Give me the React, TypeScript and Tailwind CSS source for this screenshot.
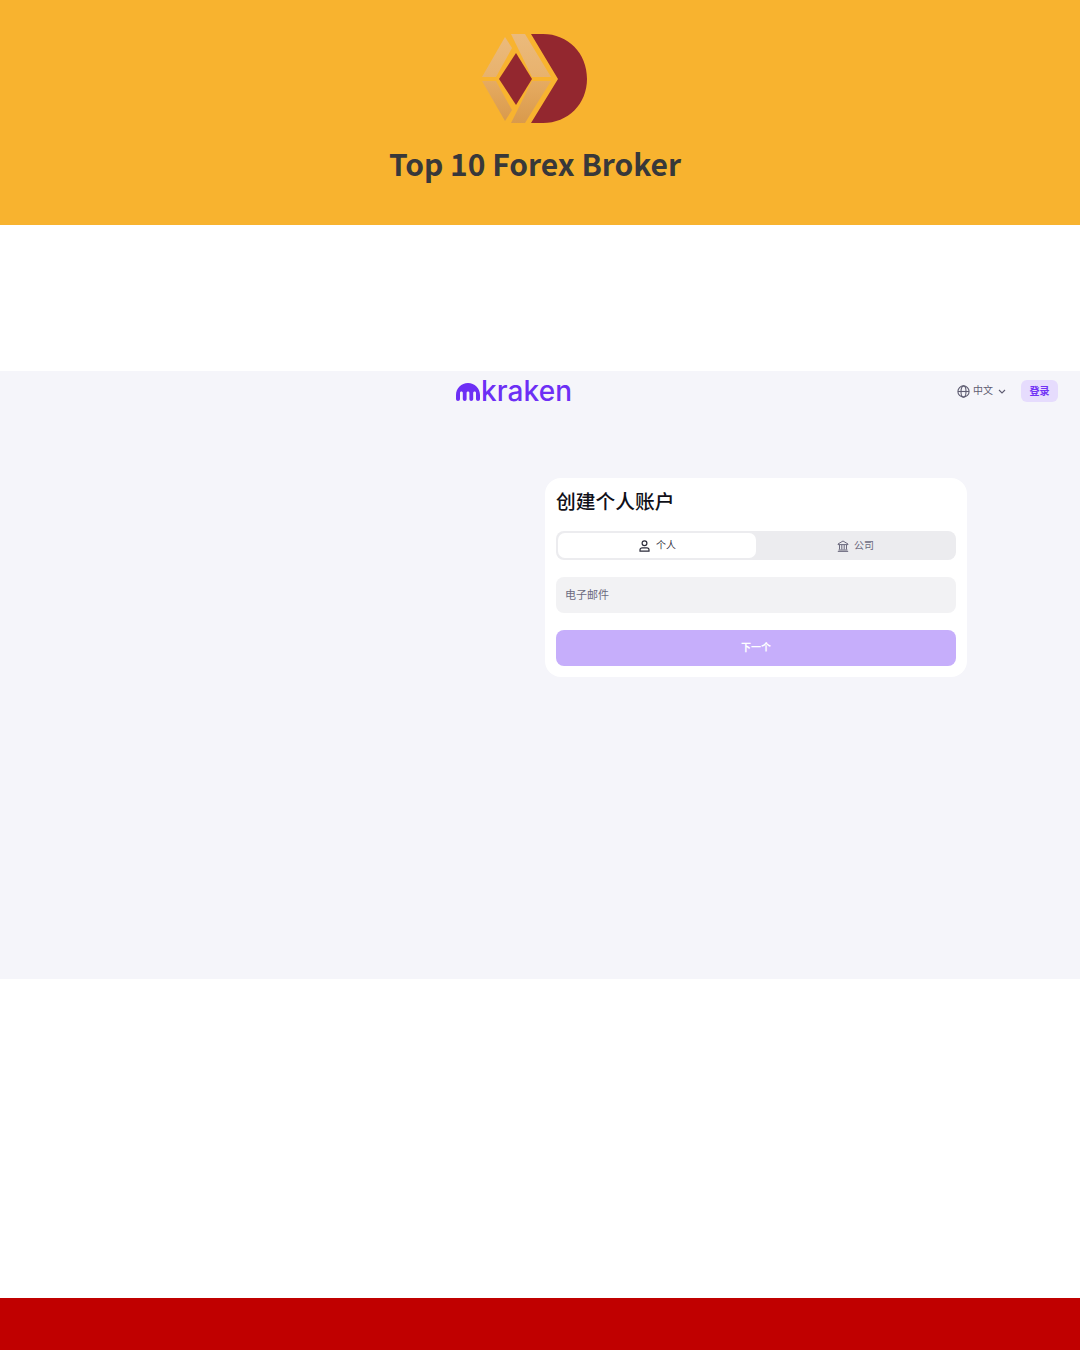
import React from "react";

const cjk = '"Noto Sans CJK SC", "Liberation Sans", sans-serif';

function BrandMark() {
  return (
    <svg width="108" height="92" viewBox="0 0 108 92" className="block">
      <defs>
        <linearGradient id="g1" x1="0" y1="0" x2="0" y2="1">
          <stop offset="0" stopColor="#ebba7c" />
          <stop offset="1" stopColor="#e8b26d" />
        </linearGradient>
        <linearGradient id="g2" x1="0" y1="0" x2="0" y2="1">
          <stop offset="0" stopColor="#e6ab61" />
          <stop offset="1" stopColor="#d99a4c" />
        </linearGradient>
      </defs>
      <path d="M51 1 H63 C88 1 107 20 107 46 C107 71 88 90 63 90 H51 L78 46 Z" fill="#93272f" />
      <path d="M31 1 H45 L71 44 H52 Z" fill="url(#g1)" />
      <path d="M25 4 L32 15 L16 44 H2 Z" fill="url(#g1)" />
      <path d="M2 48 H16 L32 77 L25 88 Z" fill="url(#g2)" />
      <path d="M52 48 H71 L45 90 H31 Z" fill="url(#g2)" />
      <path d="M36 20 L52 46 L36 72 L19 46 Z" fill="#93272f" />
    </svg>
  );
}

function KrakenIcon() {
  return (
    <svg width="24" height="18" viewBox="0 0 24 18" className="block">
      <path
        d="M12 0 C5.4 0 0 5.3 0 11.9 V16 C0 17.1 .9 18 2 18 C3.1 18 4 17.1 4 16 V9.8 C4 9 4.6 8.4 5.4 8.4 C6.2 8.4 6.8 9 6.8 9.8 V16 C6.8 17.1 7.7 18 8.8 18 C9.9 18 10.6 17.1 10.6 16 V9.8 C10.6 9 11.2 8.4 12 8.4 C12.8 8.4 13.4 9 13.4 9.8 V16 C13.4 17.1 14.1 18 15.2 18 C16.3 18 17.2 17.1 17.2 16 V9.8 C17.2 9 17.8 8.4 18.6 8.4 C19.4 8.4 20 9 20 9.8 V16 C20 17.1 20.9 18 22 18 C23.1 18 24 17.1 24 16 V11.9 C24 5.3 18.6 0 12 0 Z"
        fill="#6d2ff5"
      />
    </svg>
  );
}

function Globe() {
  return (
    <svg width="13" height="13" viewBox="0 0 13 13" fill="none" stroke="#5f5d72" strokeWidth="1.1" className="block">
      <circle cx="6.5" cy="6.5" r="5.6" />
      <ellipse cx="6.5" cy="6.5" rx="2.5" ry="5.6" />
      <path d="M1 6.5 H12" />
    </svg>
  );
}

function Chevron() {
  return (
    <svg width="8" height="5" viewBox="0 0 8 5" fill="none" stroke="#5f5d72" strokeWidth="1.1" className="block">
      <path d="M1 1 L4 4 L7 1" />
    </svg>
  );
}

function PersonIcon() {
  return (
    <svg width="11" height="12" viewBox="0 0 11 12" fill="none" stroke="#2b2b3a" strokeWidth="1.2" className="block">
      <circle cx="5.5" cy="3.2" r="2.4" />
      <path d="M1 11.2 V9.8 C1 8.6 2 7.8 3.2 7.8 H7.8 C9 7.8 10 8.6 10 9.8 V11.2 Z" />
    </svg>
  );
}

function BankIcon() {
  return (
    <svg width="12" height="12" viewBox="0 0 12 12" fill="none" stroke="#6c6a7e" strokeWidth="1" className="block">
      <path d="M1 4 L6 1 L11 4 V4.6 H1 Z" />
      <path d="M2.5 5 V9.5 M4.8 5 V9.5 M7.2 5 V9.5 M9.5 5 V9.5" />
      <path d="M1.5 10 H10.5 M0.8 11.4 H11.2" />
    </svg>
  );
}

export default function App() {
  return (
    <div className="flex h-[1350px] w-[1080px] flex-col bg-white" style={{ fontFamily: cjk }}>
      <header className="flex h-[225px] flex-col items-center bg-[#f8b32f] pt-[33px]">
        <div className="ml-[-12px]">
          <BrandMark />
        </div>
        <h1 className="ml-[-10px] mt-[16px] text-[30px] font-bold leading-[44px] text-[#38383a]">Top 10 Forex Broker</h1>
      </header>

      <div className="h-[146px]" />

      <section className="h-[608px] bg-[#f5f5fa]">
        <div className="flex h-[107px] items-start justify-between pl-[456px] pr-[22px]">
          <div className="flex items-end gap-[1px] pt-[10px]">
            <KrakenIcon />
            <span
              className="text-[28px] font-medium leading-[20px] text-[#6d2ff5]"
              style={{ fontFamily: '"Inter", sans-serif', letterSpacing: "0.1px" }}
            >
              kraken
            </span>
          </div>
          <div className="flex items-center pt-[9px]">
            <Globe />
            <span className="ml-[3px] pb-[2px] text-[10px] leading-[14px] text-[#5f5d72]">中文</span>
            <span className="ml-[5px]">
              <Chevron />
            </span>
            <span className="ml-[15px] flex h-[22px] w-[37px] items-center justify-center rounded-[6px] bg-[#e6dcfd] pb-[2px] text-[10px] font-semibold text-[#7132f5]">
              登录
            </span>
          </div>
        </div>

        <div className="pl-[545px]">
          <div className="h-[199px] w-[422px] rounded-[16px] bg-white p-[11px]">
            <h2 className="h-[42px] text-[19.75px] font-medium leading-[24px] text-[#101018]">创建个人账户</h2>
            <div className="flex h-[29px] rounded-[8px] bg-[#ececef] p-[2px]">
              <div className="flex w-[198px] items-center justify-center gap-[6px] rounded-[7px] bg-white pl-[1px] text-[10px] text-[#33333f]">
                <PersonIcon />
                <span className="pb-[2px] leading-[14px]">个人</span>
              </div>
              <div className="flex flex-1 items-center justify-center gap-[5px] pl-[1px] text-[10px] text-[#6c6a7e]">
                <BankIcon />
                <span className="pb-[2px] leading-[14px]">公司</span>
              </div>
            </div>
            <div className="mt-[17px] flex h-[36px] items-center rounded-[8px] bg-[#f2f2f4] pb-[2px] pl-[9px] text-[11px] text-[#6c6a7e]">
              电子邮件
            </div>
            <div className="mt-[17px] flex h-[36px] items-center justify-center rounded-[8px] bg-[#c6aefb] pb-[3px] text-[10px] font-semibold text-white">
              下一个
            </div>
          </div>
        </div>
      </section>

      <div className="flex-1" />
      <footer className="h-[52px] bg-[#c00000]" />
    </div>
  );
}
